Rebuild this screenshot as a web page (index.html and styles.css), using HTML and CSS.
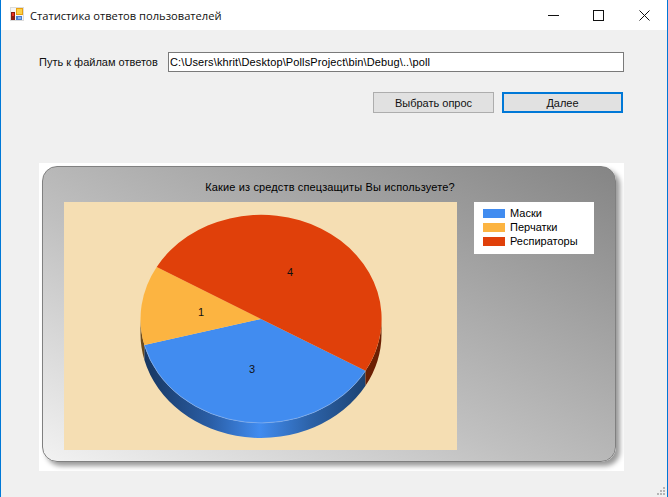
FILE: index.html
```html
<!DOCTYPE html>
<html lang="ru">
<head>
    <meta charset="UTF-8">
    <title>Статистика ответов пользователей</title>
    <link rel="stylesheet" href="styles.css">
</head>
<body>
    <div class="window">
        <div class="titlebar">
            <svg class="app-icon" width="14" height="14" viewBox="0 0 14 14">
                <rect x="0" y="0" width="14" height="14" fill="#dcdcdc"/>
                <rect x="1" y="1" width="12" height="12" fill="#f6f6f6"/>
                <rect x="6" y="1" width="7" height="7" fill="#e8a010"/>
                <rect x="7" y="2" width="5" height="5" fill="#fcd048"/>
                <rect x="1" y="5" width="4" height="8" fill="#8a1c10"/>
                <rect x="2" y="6" width="2" height="3" fill="#ec3020"/>
                <rect x="6" y="9" width="6" height="4" fill="#4a7ed0"/>
                <rect x="8" y="10" width="3" height="2" fill="#8ab4ec"/>
            </svg>
            <span class="title">Статистика ответов пользователей</span>
            <div class="controls">
                <svg class="ctl-min" width="11" height="1"><rect width="11" height="1" fill="#111"/></svg>
                <svg class="ctl-max" width="11" height="11"><rect x="0.5" y="0.5" width="10" height="10" fill="none" stroke="#111"/></svg>
                <svg class="ctl-close" width="11" height="11"><path d="M0.5 0.5L10.5 10.5M10.5 0.5L0.5 10.5" stroke="#111" fill="none"/></svg>
            </div>
        </div>

        <div class="content">
            <div class="path-row">
                <label class="path-label" for="path-input">Путь к файлам ответов</label>
                <input class="path-input" id="path-input" type="text" readonly value="C:\Users\khrit\Desktop\PollsProject\bin\Debug\..\poll">
            </div>
            <div class="actions">
                <button class="btn">Выбрать опрос</button>
                <button class="btn btn-default">Далее</button>
            </div>

            <div class="chart">
                <div class="chart-panel">
                    <div class="chart-title">Какие из средств спецзащиты Вы используете?</div>
                    <div class="chart-body">
                        <div class="plot">
                            <svg class="pie" width="393" height="248" viewBox="0 0 393 248">
                                <defs>
                                    <linearGradient id="blue-side" gradientUnits="userSpaceOnUse" x1="80" y1="0" x2="302" y2="0">
                                        <stop offset="0" stop-color="#173660"/>
                                        <stop offset="0.3" stop-color="#2a5ea6"/>
                                        <stop offset="0.52" stop-color="#418cf0"/>
                                        <stop offset="0.75" stop-color="#2c62a8"/>
                                        <stop offset="1" stop-color="#1c4272"/>
                                    </linearGradient>
                                </defs>
                                <path d="M80.4 143.1A120.5 104 0 0 1 76.5 117V132A120.5 104 0 0 0 80.4 158.1Z" fill="#6b4a1c"/>
                                <path d="M301.5 168.8A120.5 104 0 0 1 80.4 143.1V158.1A120.5 104 0 0 0 301.5 183.8Z" fill="url(#blue-side)"/>
                                <path d="M317.5 117A120.5 104 0 0 1 301.5 168.8V183.8A120.5 104 0 0 0 317.5 132Z" fill="#6c1f03"/>
                                <path d="M197 117L301.5 168.8A120.5 104 0 0 1 80.4 143.1Z" fill="#418cf0"/>
                                <path d="M197 117L80.4 143.1A120.5 104 0 0 1 92.7 64.9Z" fill="#fcb441"/>
                                <path d="M197 117L92.7 64.9A120.5 104 0 0 1 301.5 168.8Z" fill="#e0400a"/>
                                <path d="M301.5 168.8A120.5 104 0 0 1 80.4 143.1" fill="none" stroke="#8db8f5" stroke-opacity="0.6"/>
                                <text class="pie-label" x="226" y="74">4</text>
                                <text class="pie-label" x="137" y="114">1</text>
                                <text class="pie-label" x="188" y="171">3</text>
                            </svg>
                        </div>
                        <div class="legend">
                            <div class="legend-row"><span class="swatch swatch-blue"></span>Маски</div>
                            <div class="legend-row"><span class="swatch swatch-orange"></span>Перчатки</div>
                            <div class="legend-row"><span class="swatch swatch-red"></span>Респираторы</div>
                        </div>
                    </div>
                </div>
            </div>
        </div>

        <svg class="grip" width="8" height="8">
            <rect x="6" y="0" width="2" height="2" fill="#b5b5b5"/>
            <rect x="3" y="3" width="2" height="2" fill="#b5b5b5"/>
            <rect x="6" y="3" width="2" height="2" fill="#b5b5b5"/>
            <rect x="0" y="6" width="2" height="2" fill="#b5b5b5"/>
            <rect x="3" y="6" width="2" height="2" fill="#b5b5b5"/>
            <rect x="6" y="6" width="2" height="2" fill="#b5b5b5"/>
        </svg>
    </div>
</body>
</html>
```

FILE: styles.css
```css
* {
    box-sizing: border-box;
}
html, body {
    margin: 0;
    padding: 0;
    overflow: hidden;
}
body {
    font-family: "Liberation Sans", Arial, sans-serif;
    font-size: 11px;
    color: #000;
}
.window {
    position: relative;
    width: 668px;
    height: 497px;
    background-color: #f0f0f0;
    border-left: 1px solid #0078d7;
    border-right: 1px solid #0078d7;
}
.titlebar {
    display: flex;
    align-items: center;
    height: 30px;
    background-color: #fff;
    padding-left: 9px;
}
.app-icon {
    margin-right: 6px;
    margin-bottom: 2px;
}
.title {
    font-family: "Open Sans", sans-serif;
    font-size: 11.15px;
    color: #111;
}
.controls {
    display: flex;
    align-items: center;
    margin-left: auto;
    padding-right: 17px;
}
.ctl-min {
    margin-right: 34px;
}
.ctl-max {
    margin-right: 35px;
}
.content {
    padding: 22px 44px 0 38px;
}
.path-row {
    display: flex;
    align-items: center;
    height: 20px;
}
.path-label {
    flex: none;
    width: 129px;
    color: #111;
}
.path-input {
    flex: none;
    width: 456px;
    height: 20px;
    padding: 0 1px;
    border: 1px solid #7a7a7a;
    background-color: #fff;
    font-family: inherit;
    font-size: 11px;
    letter-spacing: 0.12px;
    color: #000;
    outline: none;
}
.actions {
    display: flex;
    justify-content: flex-end;
    gap: 8px;
    margin-top: 20px;
}
.btn {
    width: 121px;
    height: 21px;
    padding: 0;
    border: 1px solid #adadad;
    background-color: #e1e1e1;
    font-family: inherit;
    font-size: 11px;
    color: #111;
}
.btn-default {
    border: 2px solid #0078d7;
}
.chart {
    width: 585px;
    height: 308px;
    margin-top: 50px;
    padding: 3px;
    background-color: #fff;
    overflow: hidden;
}
.chart-panel {
    width: 574px;
    height: 296px;
    border: 1px solid #808080;
    border-radius: 15px;
    background: linear-gradient(to top right, #f2f2f2 0%, #c0c0c0 42%, #858585 100%);
    box-shadow: 4px 4px 5px rgba(0, 0, 0, 0.4);
}
.chart-title {
    height: 35px;
    padding-top: 14px;
    padding-left: 2px;
    text-align: center;
    line-height: 13px;
    letter-spacing: 0.14px;
}
.chart-body {
    display: flex;
    align-items: flex-start;
    gap: 17px;
    padding-left: 21px;
}
.plot {
    width: 393px;
    height: 248px;
    background-color: #f5deb3;
}
.pie {
    display: block;
}
.pie-label {
    font-size: 11px;
    text-anchor: middle;
    fill: #111;
}
.legend {
    width: 120px;
    height: 52px;
    padding: 4px 0 0 9px;
    background-color: #fff;
}
.legend-row {
    display: flex;
    align-items: center;
    height: 14px;
}
.swatch {
    width: 22px;
    height: 9px;
    margin-right: 5px;
}
.swatch-blue {
    background-color: #418cf0;
}
.swatch-orange {
    background-color: #fcb441;
}
.swatch-red {
    background-color: #e0400a;
}
.grip {
    position: absolute;
    right: 2px;
    bottom: 2px;
}
```
